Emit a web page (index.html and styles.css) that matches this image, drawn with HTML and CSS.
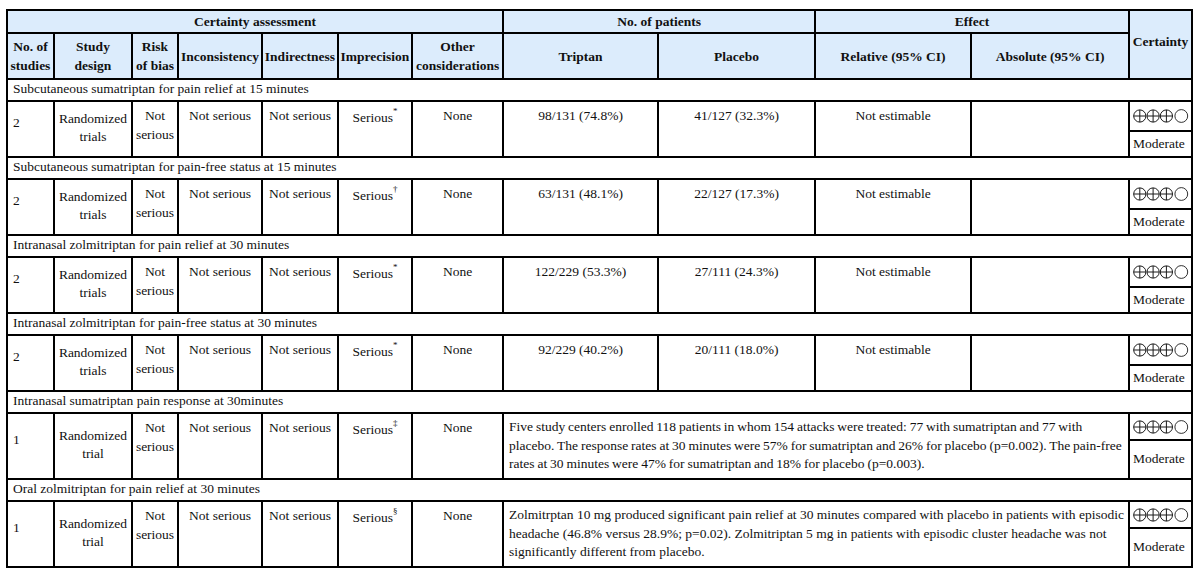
FILE: index.html
```html
<!DOCTYPE html>
<html>
<head>
<meta charset="utf-8">
<link rel="stylesheet" href="styles.css">
</head>
<body>
<table class="grade">
  <colgroup>
    <col class="c-studies"><col class="c-design"><col class="c-bias"><col class="c-incons"><col class="c-indir"><col class="c-impre"><col class="c-other">
    <col class="c-trip"><col class="c-plac"><col class="c-rel"><col class="c-abs"><col class="c-cert">
  </colgroup>
  <thead>
    <tr class="h1">
      <th colspan="7">Certainty assessment</th>
      <th colspan="2">No. of patients</th>
      <th colspan="2">Effect</th>
      <th rowspan="2" class="cert-h">Certainty</th>
    </tr>
    <tr class="h2">
      <th>No. of studies</th>
      <th class="narrow">Study design</th>
      <th class="narrow">Risk of bias</th>
      <th>Inconsistency</th>
      <th>Indirectness</th>
      <th>Imprecision</th>
      <th>Other considerations</th>
      <th>Triptan</th>
      <th>Placebo</th>
      <th>Relative (95% CI)</th>
      <th>Absolute (95% CI)</th>
    </tr>
  </thead>
  <tbody>
    <tr class="sec"><td colspan="12">Subcutaneous sumatriptan for pain relief at 15 minutes</td></tr>
    <tr class="d1">
      <td rowspan="2" class="num">2</td>
      <td rowspan="2" class="design">Randomized trials</td>
      <td rowspan="2" class="ctr">Not serious</td>
      <td rowspan="2" class="ctr">Not serious</td>
      <td rowspan="2" class="ctr">Not serious</td>
      <td rowspan="2" class="ctr">Serious<sup>*</sup></td>
      <td rowspan="2" class="ctr">None</td>
      <td rowspan="2" class="ctr">98/131 (74.8%)</td>
      <td rowspan="2" class="ctr">41/127 (32.3%)</td>
      <td rowspan="2" class="ctr">Not estimable</td>
      <td rowspan="2"></td>
      <td class="sym"><svg class="rating" viewBox="0 0 56 14" role="img" aria-label="⊕⊕⊕◯"><use href="#rate3"/></svg></td>
    </tr>
    <tr class="d2"><td class="level">Moderate</td></tr>

    <tr class="sec"><td colspan="12">Subcutaneous sumatriptan for pain-free status at 15 minutes</td></tr>
    <tr class="d1">
      <td rowspan="2" class="num">2</td>
      <td rowspan="2" class="design">Randomized trials</td>
      <td rowspan="2" class="ctr">Not serious</td>
      <td rowspan="2" class="ctr">Not serious</td>
      <td rowspan="2" class="ctr">Not serious</td>
      <td rowspan="2" class="ctr">Serious<sup>†</sup></td>
      <td rowspan="2" class="ctr">None</td>
      <td rowspan="2" class="ctr">63/131 (48.1%)</td>
      <td rowspan="2" class="ctr">22/127 (17.3%)</td>
      <td rowspan="2" class="ctr">Not estimable</td>
      <td rowspan="2"></td>
      <td class="sym"><svg class="rating" viewBox="0 0 56 14" role="img" aria-label="⊕⊕⊕◯"><use href="#rate3"/></svg></td>
    </tr>
    <tr class="d2"><td class="level">Moderate</td></tr>

    <tr class="sec"><td colspan="12">Intranasal zolmitriptan for pain relief at 30 minutes</td></tr>
    <tr class="d1">
      <td rowspan="2" class="num">2</td>
      <td rowspan="2" class="design">Randomized trials</td>
      <td rowspan="2" class="ctr">Not serious</td>
      <td rowspan="2" class="ctr">Not serious</td>
      <td rowspan="2" class="ctr">Not serious</td>
      <td rowspan="2" class="ctr">Serious<sup>*</sup></td>
      <td rowspan="2" class="ctr">None</td>
      <td rowspan="2" class="ctr">122/229 (53.3%)</td>
      <td rowspan="2" class="ctr">27/111 (24.3%)</td>
      <td rowspan="2" class="ctr">Not estimable</td>
      <td rowspan="2"></td>
      <td class="sym"><svg class="rating" viewBox="0 0 56 14" role="img" aria-label="⊕⊕⊕◯"><use href="#rate3"/></svg></td>
    </tr>
    <tr class="d2"><td class="level">Moderate</td></tr>

    <tr class="sec"><td colspan="12">Intranasal zolmitriptan for pain-free status at 30 minutes</td></tr>
    <tr class="d1">
      <td rowspan="2" class="num">2</td>
      <td rowspan="2" class="design">Randomized trials</td>
      <td rowspan="2" class="ctr">Not serious</td>
      <td rowspan="2" class="ctr">Not serious</td>
      <td rowspan="2" class="ctr">Not serious</td>
      <td rowspan="2" class="ctr">Serious<sup>*</sup></td>
      <td rowspan="2" class="ctr">None</td>
      <td rowspan="2" class="ctr">92/229 (40.2%)</td>
      <td rowspan="2" class="ctr">20/111 (18.0%)</td>
      <td rowspan="2" class="ctr">Not estimable</td>
      <td rowspan="2"></td>
      <td class="sym"><svg class="rating" viewBox="0 0 56 14" role="img" aria-label="⊕⊕⊕◯"><use href="#rate3"/></svg></td>
    </tr>
    <tr class="d2"><td class="level">Moderate</td></tr>

    <tr class="sec"><td colspan="12">Intranasal sumatriptan pain response at 30minutes</td></tr>
    <tr class="d1 tall">
      <td rowspan="2" class="num">1</td>
      <td rowspan="2" class="design">Randomized trial</td>
      <td rowspan="2" class="ctr">Not serious</td>
      <td rowspan="2" class="ctr">Not serious</td>
      <td rowspan="2" class="ctr">Not serious</td>
      <td rowspan="2" class="ctr">Serious<sup>‡</sup></td>
      <td rowspan="2" class="ctr">None</td>
      <td rowspan="2" colspan="4" class="narr tight">Five study centers enrolled 118 patients in whom 154 attacks were treated: 77 with sumatriptan and 77 with placebo. The response rates at 30 minutes were 57% for sumatriptan and 26% for placebo (p=0.002). The pain-free rates at 30 minutes were 47% for sumatriptan and 18% for placebo (p=0.003).</td>
      <td class="sym"><svg class="rating" viewBox="0 0 56 14" role="img" aria-label="⊕⊕⊕◯"><use href="#rate3"/></svg></td>
    </tr>
    <tr class="d2 tall"><td class="level">Moderate</td></tr>

    <tr class="sec"><td colspan="12">Oral zolmitriptan for pain relief at 30 minutes</td></tr>
    <tr class="d1 tall">
      <td rowspan="2" class="num">1</td>
      <td rowspan="2" class="design">Randomized trial</td>
      <td rowspan="2" class="ctr">Not serious</td>
      <td rowspan="2" class="ctr">Not serious</td>
      <td rowspan="2" class="ctr">Not serious</td>
      <td rowspan="2" class="ctr">Serious<sup>§</sup></td>
      <td rowspan="2" class="ctr">None</td>
      <td rowspan="2" colspan="4" class="narr">Zolmitrptan 10 mg produced significant pain relief at 30 minutes compared with placebo in patients with episodic headache (46.8% versus 28.9%; p=0.02). Zolmitriptan 5 mg in patients with episodic cluster headache was not significantly different from placebo.</td>
      <td class="sym"><svg class="rating" viewBox="0 0 56 14" role="img" aria-label="⊕⊕⊕◯"><use href="#rate3"/></svg></td>
    </tr>
    <tr class="d2 tall"><td class="level">Moderate</td></tr>
  </tbody>
</table>

<svg class="defs" width="0" height="0" aria-hidden="true">
  <defs>
    <g id="rate3" fill="none" stroke="#1a1a1a" stroke-width="1">
      <circle cx="6.8" cy="7" r="6.1"/>
      <path d="M0.7 7H12.9M6.8 0.9V13.1"/>
      <circle cx="20.1" cy="7" r="6.1"/>
      <path d="M14 7H26.2M20.1 0.9V13.1"/>
      <circle cx="33.4" cy="7" r="6.1"/>
      <path d="M27.3 7H39.5M33.4 0.9V13.1"/>
      <circle cx="48.3" cy="7" r="6.4" stroke-width="0.9"/>
    </g>
  </defs>
</svg>
</body>
</html>
```

FILE: styles.css
```css
html, body {
  margin: 0;
  padding: 0;
  background: #ffffff;
}

body {
  font-family: "Liberation Serif", "Times New Roman", serif;
  font-size: 13.5px;
  color: #111;
}

.defs {
  position: absolute;
  width: 0;
  height: 0;
  overflow: hidden;
}

.grade {
  border-collapse: collapse;
  table-layout: fixed;
  width: 1187px;
  margin: 9px 0 0 6px;
}

.grade th,
.grade td {
  border: 2px solid #000;
  padding: 3px 5px;
  line-height: 18.5px;
  overflow: hidden;
}

.c-studies { width: 47px; }
.c-design { width: 78px; }
.c-bias { width: 46px; }
.c-incons { width: 84px; }
.c-indir { width: 76px; }
.c-impre { width: 74px; }
.c-other { width: 91px; }
.c-trip { width: 155px; }
.c-plac { width: 157px; }
.c-rel { width: 156px; }
.c-abs { width: 158px; }
.c-cert { width: 63px; }

.grade th {
  background: #dcecfc;
  font-weight: bold;
  text-align: center;
  vertical-align: middle;
  padding: 0 1px;
  line-height: 19px;
}

.grade th.narrow {
  padding: 0 3px;
}

.h1 { height: 23px; }
.h2 { height: 46px; }

.grade th.cert-h {
  padding-bottom: 7px;
}

.sec td {
  height: 20px;
  padding: 0 5px;
  vertical-align: middle;
  text-align: left;
}

.d1 { height: 30px; }
.d2 { height: 26px; }
.d1.tall { height: 27px; }
.d2.tall { height: 39px; }

.grade td {
  vertical-align: top;
}

.grade td.num {
  vertical-align: middle;
  text-align: left;
  padding-top: 0;
  padding-bottom: 12px;
}

.grade td.design {
  vertical-align: middle;
  text-align: center;
  padding: 0 1px 2px;
}

.grade td.ctr {
  text-align: center;
  padding: 5px 2px 3px;
}

.grade td.narr {
  text-align: left;
  padding: 4px 1px 3px 5px;
}

.grade td.narr.tight {
  word-spacing: -0.5px;
}

.grade td.sym {
  padding: 0 0 0 3px;
  line-height: 14px;
  vertical-align: middle;
  white-space: nowrap;
}

.rating {
  display: block;
  width: 56px;
  height: 14px;
}

.grade td.level {
  padding: 0 3px;
  vertical-align: middle;
}

sup {
  font-size: 9px;
  line-height: 1;
  vertical-align: 8px;
}
```
